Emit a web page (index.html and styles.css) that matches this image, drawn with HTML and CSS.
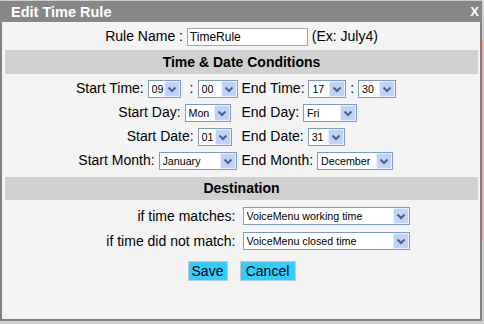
FILE: index.html
```html
<!DOCTYPE html>
<html lang="en">
<head>
<meta charset="UTF-8">
<title>Edit Time Rule</title>
<link rel="stylesheet" href="styles.css">
</head>
<body>
<div class="page">
<div class="dialog">
  <div class="titlebar">
    <span>Edit Time Rule</span>
    <span class="close">X</span>
  </div>
  <div class="content">
    <div class="name-row">
      Rule Name : <input type="text" class="name-input" value="TimeRule"> (Ex: July4)
    </div>

    <div class="section">Time &amp; Date Conditions</div>
    <table class="form">
      <tr>
        <td class="left">Start Time: <select class="sel w-hour"><option>09</option></select><span class="colon">:</span><select class="sel w-min"><option>00</option></select></td>
        <td class="right">End Time: <select class="sel w-hour2"><option>17</option></select> : <select class="sel w-hour2"><option>30</option></select></td>
      </tr>
      <tr>
        <td class="left">Start Day: <select class="sel w-day"><option>Mon</option></select></td>
        <td class="right">End Day: <select class="sel w-day2"><option>Fri</option></select></td>
      </tr>
      <tr>
        <td class="left">Start Date: <select class="sel w-date"><option>01</option></select></td>
        <td class="right">End Date: <select class="sel w-date2"><option>31</option></select></td>
      </tr>
      <tr>
        <td class="left">Start Month: <select class="sel w-month"><option>January</option></select></td>
        <td class="right">End Month: <select class="sel w-month2"><option>December</option></select></td>
      </tr>
    </table>

    <div class="section dest">Destination</div>
    <table class="form dest-form">
      <tr>
        <td class="left">if time matches:</td>
        <td class="right"><select class="sel w-dest"><option>VoiceMenu working time</option></select></td>
      </tr>
      <tr>
        <td class="left">if time did not match:</td>
        <td class="right"><select class="sel w-dest"><option>VoiceMenu closed time</option></select></td>
      </tr>
    </table>

    <div class="buttons">
      <button type="button" class="button save">Save</button>
      <button type="button" class="button cancel">Cancel</button>
    </div>
  </div>
</div>
<div class="page-edge"></div>
</div>
</body>
</html>
```

FILE: styles.css
```css
  body {
    margin: 0;
    background-color: #d0d0d0;
    font-family: "Liberation Sans", Arial, sans-serif;
    color: #000;
  }
  .page {
    display: flex;
    align-items: flex-start;
  }
  .page-edge {
    width: 2px;
    height: 200px;
    margin-top: 40px;
    background-color: #f4a4a4;
  }
  .dialog {
    flex: none;
    width: 482px;
    margin-top: 1px;
    background-color: #f4f4f4;
  }
  .titlebar {
    height: 21px;
    background-color: #878787;
    color: #fff;
    font-size: 14.5px;
    font-weight: bold;
    display: flex;
    justify-content: space-between;
    align-items: center;
    padding: 0 3px 0 11px;
  }
  .close {
    font-size: 13px;
  }
  .content {
    height: 299px;
    box-sizing: border-box;
    border: 2px solid #808080;
    border-top: none;
    padding: 0 2px 0 3px;
  }
  .name-row {
    height: 28px;
    line-height: 28px;
    text-align: center;
    font-size: 14px;
  }
  .name-input {
    width: 121px;
    height: 18px;
    box-sizing: border-box;
    border: 1px solid #a5a5a5;
    font-family: "Liberation Sans", Arial, sans-serif;
    font-size: 12px;
    padding: 0 2px;
    vertical-align: middle;
    background-color: #fff;
  }
  .section {
    height: 24px;
    line-height: 24px;
    background-color: #d0d0d0;
    text-align: center;
    font-weight: bold;
    font-size: 14px;
  }
  .section.dest {
    margin-top: 4px;
    height: 23px;
    line-height: 23px;
  }
  .form {
    width: 100%;
    border-collapse: collapse;
    margin-top: 3px;
    font-size: 14px;
  }
  .form td {
    height: 24px;
    padding: 0;
    white-space: nowrap;
  }
  .form .left {
    width: 50%;
    text-align: right;
    padding-right: 4px;
  }
  .form .right {
    text-align: left;
  }
  .colon {
    margin: 0 4px 0 9px;
  }
  .dest-form td {
    height: 25px;
  }
  .dest-form .left {
    padding-right: 6px;
  }
  .dest-form .right {
    padding-left: 1px;
  }
  .sel {
    -webkit-appearance: none;
    appearance: none;
    height: 18px;
    box-sizing: border-box;
    border: 1px solid #7f9db9;
    border-radius: 0;
    padding: 0 16px 0 3px;
    font-family: "Liberation Sans", Arial, sans-serif;
    font-size: 10.7px;
    color: #000;
    vertical-align: middle;
    background-color: #fff;
    background-image: url("data:image/svg+xml;utf8,<svg xmlns='http://www.w3.org/2000/svg' width='16' height='16'><rect x='0.5' y='0.5' width='15' height='15' rx='1.5' fill='%23c2d3fb' stroke='%23e9effd'/><path d='M4.5 6.5 L8 10 L11.5 6.5' fill='none' stroke='%234d6185' stroke-width='2'/></svg>");
    background-repeat: no-repeat;
    background-position: right 0 center;
  }
  .w-hour { width: 33px; }
  .w-min { width: 40px; }
  .w-hour2 { width: 38px; }
  .w-day { width: 46px; margin-right: 7px; }
  .w-day2 { width: 54px; }
  .w-date { width: 34px; margin-right: 6px; }
  .w-date2 { width: 37px; }
  .w-month { width: 78px; margin-right: 1px; }
  .w-month2 { width: 76px; }
  .w-dest { width: 167px; }
  .buttons {
    margin-top: 8px;
    display: flex;
    justify-content: center;
    gap: 12px;
  }
  .button {
    height: 20px;
    padding: 0;
    font-family: "Liberation Sans", Arial, sans-serif;
    font-size: 14px;
    color: #000;
    background-color: #33ccff;
    border: 1px solid #c8c8c8;
    cursor: pointer;
  }
  .save { width: 40px; }
  .cancel { width: 56px; }
```
